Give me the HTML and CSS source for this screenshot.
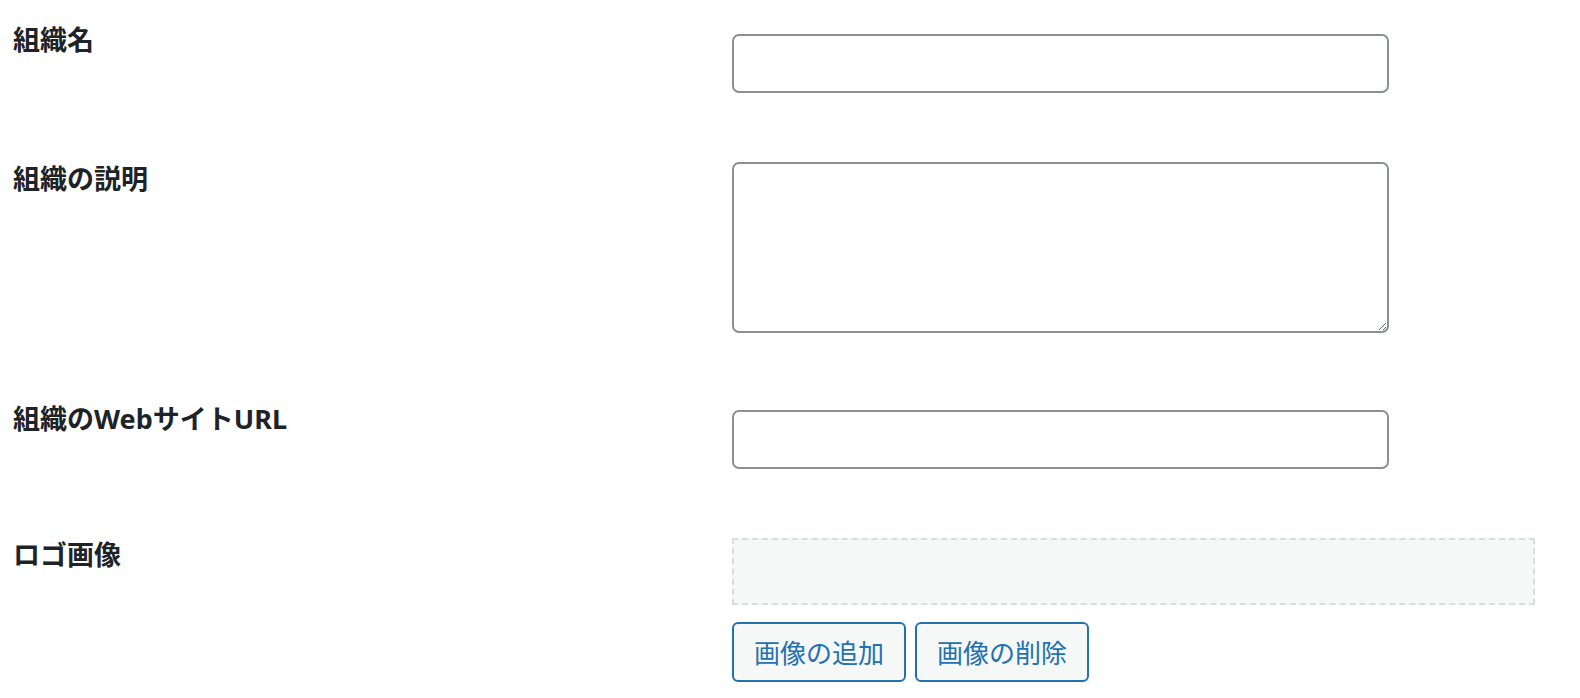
FILE: index.html
```html
<!DOCTYPE html>
<html lang="ja">
<head>
    <meta charset="UTF-8">
    <meta name="viewport" content="width=device-width, initial-scale=1.0">
    <title>組織設定</title>
    <link rel="stylesheet" href="styles.css">
</head>
<body>
    <form class="form-table">
        <div class="form-row">
            <label class="form-label" for="orgName">組織名</label>
            <div class="form-field field-offset first">
                <input type="text" id="orgName" class="regular-text">
            </div>
        </div>

        <div class="form-row">
            <label class="form-label" for="orgDesc">組織の説明</label>
            <div class="form-field">
                <textarea id="orgDesc" class="regular-text"></textarea>
            </div>
        </div>

        <div class="form-row">
            <label class="form-label" for="orgUrl">組織のWebサイトURL</label>
            <div class="form-field field-offset">
                <input type="text" id="orgUrl" class="regular-text">
            </div>
        </div>

        <div class="form-row">
            <span class="form-label">ロゴ画像</span>
            <div class="form-field">
                <div class="logo-preview"></div>
                <div class="logo-buttons">
                    <button type="button" class="button">画像の追加</button>
                    <button type="button" class="button">画像の削除</button>
                </div>
            </div>
        </div>
    </form>
</body>
</html>
```

FILE: styles.css
```css
/* Base */
body {
    margin: 0;
    background-color: #fff;
    color: #1d2327;
    font-family: 'Noto Sans CJK JP', 'Noto Sans', sans-serif;
}

.form-table {
    padding: 23px 0 0 13px;
}

/* Each setting row: label column + field column */
.form-row {
    display: flex;
    align-items: flex-start;
    margin-bottom: 69px;
}

.form-row:last-child {
    margin-bottom: 0;
}

.form-label {
    width: 719px;
    flex-shrink: 0;
    padding-top: 3px;
    font-family: 'Noto Sans', 'Noto Sans CJK JP', sans-serif;
    font-size: 27px;
    font-weight: 700;
    line-height: 28px;
    color: #1d2327;
}

.form-field {
    display: flex;
    flex-direction: column;
}

/* single-line inputs sit a little lower than their label */
.field-offset {
    padding-top: 8px;
}

.field-offset.first {
    padding-top: 11px;
}

.regular-text {
    box-sizing: border-box;
    width: 657px;
    height: 59px;
    margin: 0;
    padding: 0 15px;
    border: 2px solid #8c8f94;
    border-radius: 7px;
    background-color: #fff;
    font-family: inherit;
    font-size: 26px;
    color: #2c3338;
}

textarea.regular-text {
    height: 171px;
    padding: 10px 15px;
    display: block;
}

/* Logo image area */
.logo-preview {
    box-sizing: border-box;
    width: 803px;
    height: 67px;
    border: 2px dashed #dcdcde;
    background-color: #f6f7f7;
}

.logo-buttons {
    display: flex;
    gap: 9px;
    margin-top: 17px;
}

.button {
    box-sizing: border-box;
    height: 60px;
    padding: 0 20px;
    border: 2px solid #2271b1;
    border-radius: 6px;
    background-color: #f6f7f7;
    color: #2271b1;
    font-family: inherit;
    font-size: 26px;
    line-height: 1;
    cursor: pointer;
}

.button:hover {
    background-color: #f0f0f1;
    color: #0a4b78;
}
```
